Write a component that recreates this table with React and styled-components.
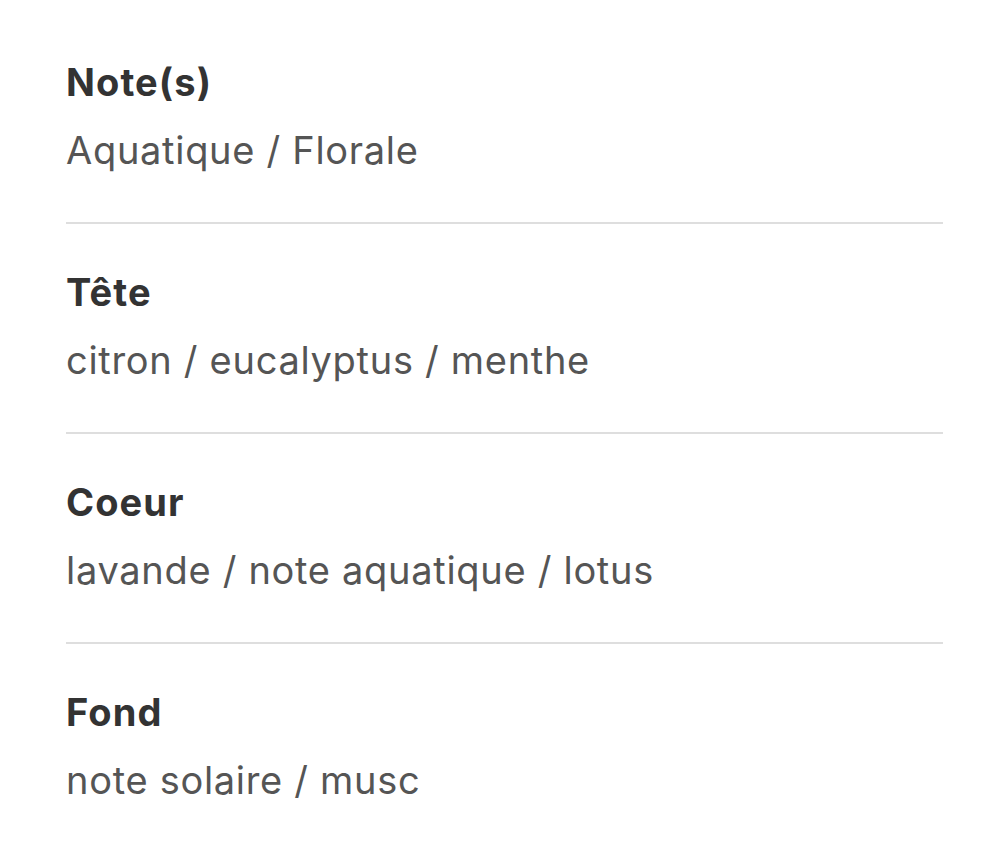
import styled, { createGlobalStyle } from 'styled-components';

const GlobalStyle = createGlobalStyle`
  html, body {
    margin: 0;
    padding: 0;
    background: #fff;
  }
  body {
    font-family: Inter, 'Noto Sans', 'Liberation Sans', sans-serif;
    -webkit-font-smoothing: antialiased;
  }
`;

const notes = [
  { label: 'Note(s)', value: 'Aquatique / Florale' },
  { label: 'Tête', value: 'citron / eucalyptus / menthe' },
  { label: 'Coeur', value: 'lavande / note aquatique / lotus' },
  { label: 'Fond', value: 'note solaire / musc' },
];

export default function App() {
  return (
    <>
      <GlobalStyle />
      <Page>
        {notes.map((n, i) => (
          <Section key={n.label} $last={i === notes.length - 1}>
            <Label>{n.label}</Label>
            <Value>{n.value}</Value>
          </Section>
        ))}
      </Page>
    </>
  );
}

// liste des notes
const Page = styled.div`
  display: flex;
  flex-direction: column;
  padding: 14px 51px 0 66px;
`;

const Section = styled.div`
  display: flex;
  flex-direction: column;
  gap: 20px;
  padding: 44px 0 48px;
  border-bottom: ${(p) => (p.$last ? 'none' : '2.5px solid #dedede')};
`;

const Label = styled.div`
  font-size: 38px;
  line-height: 48px;
  font-weight: 700;
  color: #333;
  letter-spacing: 1.1px;
`;

const Value = styled.div`
  font-size: 38px;
  line-height: 48px;
  font-weight: 400;
  color: #555;
  letter-spacing: 0.7px;
`;
